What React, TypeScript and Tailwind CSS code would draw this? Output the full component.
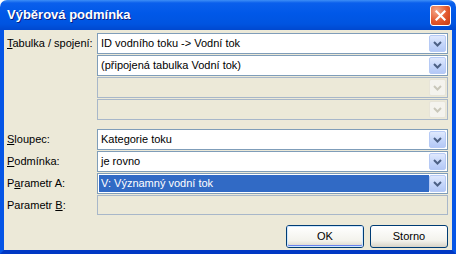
import type { ReactNode } from 'react'

const FONT = "font-['Liberation_Sans',Arial,sans-serif]"

function Label({ children }: { children: ReactNode }) {
  return <div className="flex w-[93px] shrink-0 items-center pl-[3px] text-[11px] text-black">{children}</div>
}

function Arrow({ disabled }: { disabled?: boolean }) {
  return (
    <div
      className={
        disabled
          ? 'flex h-[17px] w-[17px] shrink-0 items-center justify-center rounded-[2px] border border-[#E7E4D8] bg-[#F4F3EE]'
          : 'flex h-[17px] w-[17px] shrink-0 items-center justify-center rounded-[2px] border border-[#B6CAF5] bg-[linear-gradient(to_bottom,#E0E9FD,#C2D4FA_60%,#B4C8F6)]'
      }
    >
      <svg width="9" height="6" viewBox="0 0 9 6">
        <path d="M1 1 L4.5 4.5 L8 1" fill="none" stroke={disabled ? '#C9C7BA' : '#4D6185'} strokeWidth="2" />
      </svg>
    </div>
  )
}

function Combo({ text, disabled, selected }: { text?: string; disabled?: boolean; selected?: boolean }) {
  return (
    <div
      className={`flex h-[21px] flex-1 items-center border p-px ${
        disabled ? 'border-[#A8B7C9] bg-[#ECE9D8]' : 'border-[#7F9DB9] bg-white'
      }`}
    >
      <div
        className={`flex h-full flex-1 items-center pl-[2px] text-[11px] ${
          selected ? 'bg-[#316AC5] text-white' : 'text-black'
        }`}
      >
        {text}
      </div>
      <Arrow disabled={disabled} />
    </div>
  )
}

function Row({ label, children }: { label: ReactNode; children: ReactNode }) {
  return (
    <div className="flex h-[21px]">
      <Label>{label}</Label>
      {children}
    </div>
  )
}

function XpButton({ children, primary }: { children: ReactNode; primary?: boolean }) {
  return (
    <div className="h-[23px] w-[78px] rounded-[3px] border border-[#003C74] bg-[linear-gradient(to_bottom,#FFFFFF,#F3F2EC_70%,#D8D3C7)]">
      <div
        className={`flex h-full w-full items-center justify-center rounded-[2px] text-[11px] text-black ${
          primary ? 'shadow-[inset_0_0_0_1px_#CEE7FF,inset_0_-1px_0_1px_#6982EE]' : ''
        }`}
      >
        {children}
      </div>
    </div>
  )
}

export default function App() {
  return (
    <div className={`flex h-[254px] w-[456px] flex-col overflow-hidden rounded-t-[7px] ${FONT}`}>
      {/* title bar */}
      <div className="flex h-[30px] shrink-0 items-center justify-between bg-[linear-gradient(to_bottom,#3D8EF6_0%,#0A5FEC_10%,#0058E8_45%,#0054E0_80%,#0048CF_100%)] pl-[7px] pr-[5px]">
        <span className="text-[13px] font-bold text-white [text-shadow:1px_1px_0_#0A1E80]">Výběrová podmínka</span>
        <div className="flex h-[21px] w-[21px] items-center justify-center rounded-[3px] border border-white bg-[radial-gradient(circle_at_30%_25%,#F5A88A,#E2572C_55%,#C43A12)]">
          <svg width="11" height="11" viewBox="0 0 11 11">
            <path d="M1.5 1.5 L9.5 9.5 M9.5 1.5 L1.5 9.5" stroke="white" strokeWidth="2.2" strokeLinecap="square" />
          </svg>
        </div>
      </div>

      {/* body */}
      <div className="flex flex-1 flex-col border-x-4 border-b-4 border-x-[#0555E6] border-b-[#0038C4] bg-[#ECE9D8] pr-[4px] pt-[3px]">
        <div className="flex flex-col gap-px">
          <Row label={<span><u>T</u>abulka / spojení:</span>}>
            <Combo text="ID vodního toku -> Vodní tok" />
          </Row>
          <Row label="">
            <Combo text="(připojená tabulka Vodní tok)" />
          </Row>
          <Row label="">
            <Combo disabled />
          </Row>
          <Row label="">
            <Combo disabled />
          </Row>
        </div>

        <div className="mt-[9px] flex flex-col gap-px">
          <Row label={<span><u>S</u>loupec:</span>}>
            <Combo text="Kategorie toku" />
          </Row>
          <Row label={<span><u>P</u>odmínka:</span>}>
            <Combo text="je rovno" />
          </Row>
          <Row label={<span>P<u>a</u>rametr A:</span>}>
            <Combo text="V: Významný vodní tok" selected />
          </Row>
          <Row label={<span>Parametr <u>B</u>:</span>}>
            <div className="h-[20px] flex-1 border border-[#A8B7C9] bg-[#ECE9D8]" />
          </Row>
        </div>

        <div className="mt-[9px] flex justify-end gap-[6px]">
          <XpButton primary>OK</XpButton>
          <XpButton>Storno</XpButton>
        </div>
      </div>
    </div>
  )
}
